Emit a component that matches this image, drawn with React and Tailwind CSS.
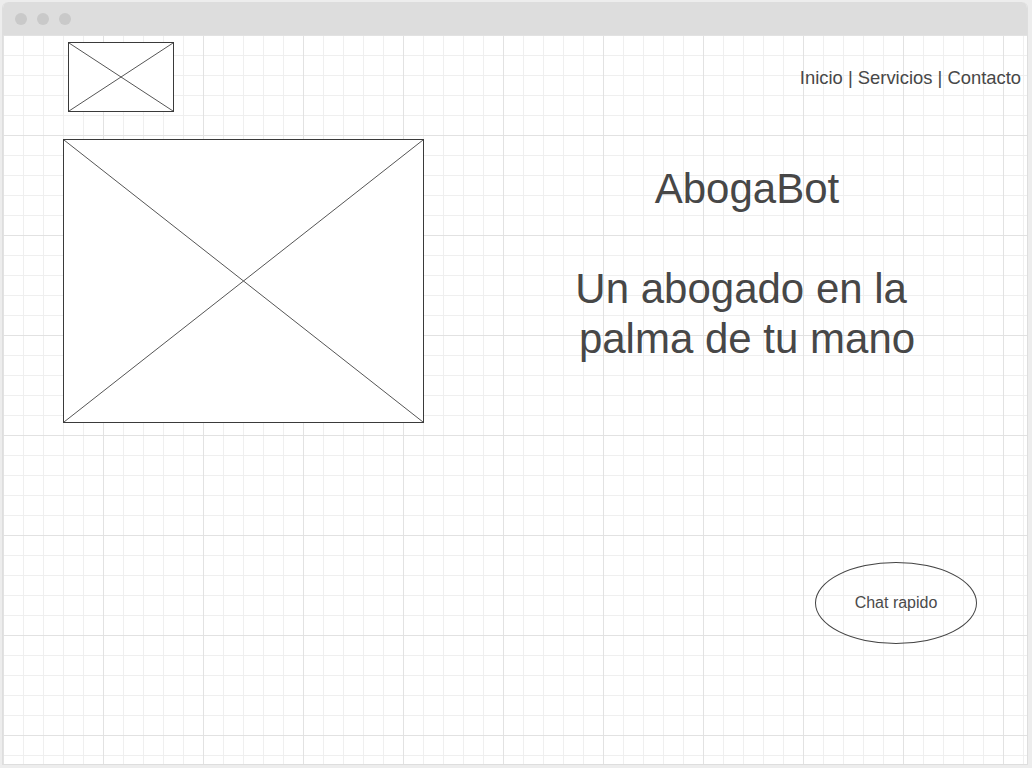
import React from "react";

function Placeholder({ className }) {
  return (
    <div className={"relative border border-[#3a3a3a] bg-white " + className}>
      <svg className="absolute inset-0 h-full w-full" viewBox="0 0 100 100" preserveAspectRatio="none">
        <line x1="0" y1="0" x2="100" y2="100" stroke="#555" strokeWidth="1" vectorEffect="non-scaling-stroke" />
        <line x1="100" y1="0" x2="0" y2="100" stroke="#555" strokeWidth="1" vectorEffect="non-scaling-stroke" />
      </svg>
    </div>
  );
}

export default function App() {
  return (
    <div className="h-[768px] w-[1032px] overflow-hidden bg-[#ededed] p-[2px] font-['Liberation_Sans',Arial,sans-serif] text-[#474747]">
      <div className="flex h-[763px] w-[1026px] flex-col overflow-hidden rounded-t-[6px] border border-[#dedede] border-t-0 bg-white">
        {/* window chrome */}
        <div className="flex h-[33px] shrink-0 items-center gap-[10px] bg-[#dddddd] pl-[12px]">
          <span className="h-[12px] w-[12px] rounded-full bg-[#c9c9c9]" />
          <span className="h-[12px] w-[12px] rounded-full bg-[#c9c9c9]" />
          <span className="h-[12px] w-[12px] rounded-full bg-[#c9c9c9]" />
        </div>

        {/* canvas */}
        <div className="flex-1 bg-white bg-[linear-gradient(to_right,#e2e2e2_1px,transparent_1px),linear-gradient(to_bottom,#e2e2e2_1px,transparent_1px),linear-gradient(to_right,#efefef_1px,transparent_1px),linear-gradient(to_bottom,#efefef_1px,transparent_1px)] [background-size:100px_100px,100px_100px,20px_20px,20px_20px]">
          <div className="flex items-start justify-between pl-[65px] pr-[6px] pt-[7px]">
            <Placeholder className="h-[70px] w-[106px]" />
            <nav className="mt-[25px] text-[18.4px] leading-[21px]">
              Inicio | Servicios | Contacto
            </nav>
          </div>

          <div className="mt-[27px] flex items-start">
            <Placeholder className="ml-[60px] h-[284px] w-[361px] shrink-0" />
            <div className="ml-[148px] mt-[25px] w-[350px] whitespace-pre text-center text-[42px] leading-[50px]">
              <div>AbogaBot</div>
              <div className="h-[50px]" />
              <div>{"Un abogado en la\u00a0"}</div>
              <div>palma de tu mano</div>
            </div>
          </div>

          <div className="ml-[812px] mt-[139px] flex h-[82px] w-[162px] items-center justify-center rounded-[50%] border border-[#444] text-[16px] text-[#4a4a4a]">
            Chat rapido
          </div>
        </div>
      </div>
    </div>
  );
}
